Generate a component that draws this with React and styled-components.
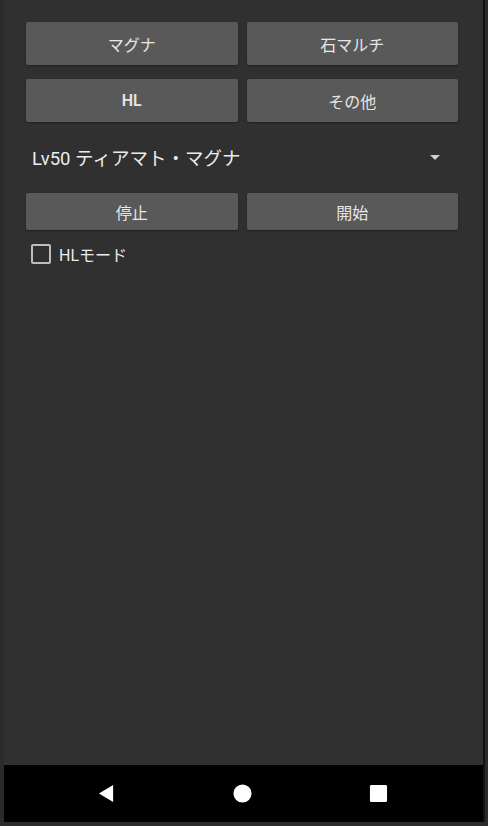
import React from 'react'
import { styled, createGlobalStyle } from 'styled-components'

const Global = createGlobalStyle`
  html, body {
    margin: 0;
    padding: 0;
    background: #2b2b2b;
  }
  body {
    font-family: Roboto, "Noto Sans CJK JP", sans-serif;
  }
`

const Frame = styled.div`
  display: flex;
  flex-direction: column;
  width: 488px;
  height: 826px;
  padding: 0 3px 4px 4px;
  box-sizing: border-box;
`

const Screen = styled.div`
  flex: 1;
  display: flex;
  flex-direction: column;
  background: #303030;
  border-right: 2px solid #111;
`

const Content = styled.div`
  flex: 1;
  display: flex;
  flex-direction: column;
  padding: 22px 25px 0 22px;
`

const ButtonRow = styled.div`
  display: grid;
  grid-template-columns: 1fr 1fr;
  gap: 9px;
  margin-bottom: ${({ $mb }) => $mb || 0}px;
`

const Button = styled.button`
  height: ${({ $h }) => $h || 43}px;
  background: #595959;
  border: none;
  border-radius: 2px;
  color: #e6e6e6;
  font-family: Roboto, "Noto Sans CJK JP", sans-serif;
  font-size: 16px;
  font-weight: ${({ $bold }) => ($bold ? 600 : 400)};
  box-shadow: 0 1px 2px rgba(0, 0, 0, 0.35);
  padding: 0;
`

const Select = styled.div`
  display: flex;
  align-items: center;
  justify-content: space-between;
  height: 44px;
  margin: 13px 0 14px 0;
  padding: 0 18px 0 6px;
  color: #ececec;
  font-size: 18.5px;
`

const Caret = styled.span`
  width: 0;
  height: 0;
  border-left: 5px solid transparent;
  border-right: 5px solid transparent;
  border-top: 5px solid #cfcfcf;
`

const CheckRow = styled.label`
  display: flex;
  align-items: center;
  gap: 8px;
  margin-top: 12px;
  padding-left: 5px;
  color: #ececec;
  font-size: 16px;
`

const Box = styled.span`
  width: 16px;
  height: 16px;
  border: 2px solid #bdbdbd;
  border-radius: 2px;
`

const NavBar = styled.div`
  height: 57px;
  background: #000;
  display: flex;
  align-items: center;
  justify-content: center;
  gap: 117px;
  padding-right: 2px;
`

const NavIcon = styled.svg`
  width: 19px;
  height: 19px;
  fill: #fff;
`

export default function App() {
  return (
    <Frame>
      <Global />
      <Screen>
        <Content>
          <ButtonRow $mb={14}>
            <Button>マグナ</Button>
            <Button>石マルチ</Button>
          </ButtonRow>
          <ButtonRow>
            <Button $bold>HL</Button>
            <Button>その他</Button>
          </ButtonRow>
          <Select>
            <span>Lv50 ティアマト・マグナ</span>
            <Caret />
          </Select>
          <ButtonRow>
            <Button $h={37}>停止</Button>
            <Button $h={37}>開始</Button>
          </ButtonRow>
          <CheckRow>
            <Box />
            HLモード
          </CheckRow>
        </Content>
        <NavBar>
          <NavIcon viewBox="0 0 20 20">
            <path d="M17 1 L17 19 L2 10 Z" />
          </NavIcon>
          <NavIcon viewBox="0 0 20 20">
            <circle cx="10" cy="10" r="9.5" />
          </NavIcon>
          <NavIcon viewBox="0 0 20 20">
            <rect x="1" y="1" width="18" height="18" rx="1.5" />
          </NavIcon>
        </NavBar>
      </Screen>
    </Frame>
  )
}
